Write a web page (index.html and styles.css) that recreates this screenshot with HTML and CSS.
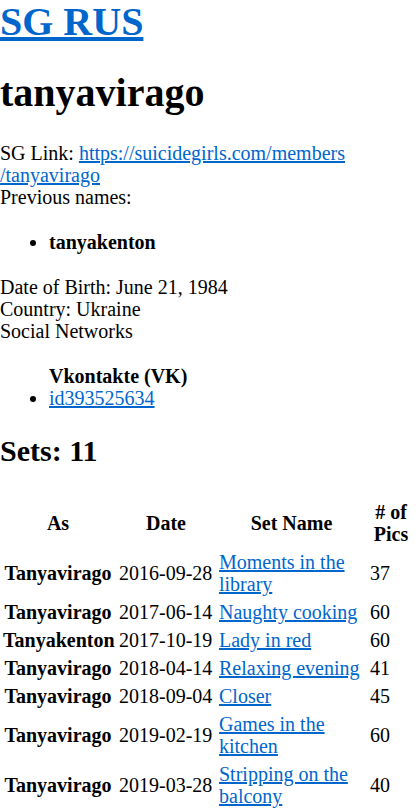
FILE: index.html
```html
<!DOCTYPE html>
<html lang="en">
<head>
    <meta charset="UTF-8">
    <meta name="viewport" content="width=device-width, initial-scale=1.0">
    <title>tanyavirago - SG RUS</title>
    <link rel="stylesheet" href="styles.css">
</head>
<body>
    <h1><a href="#">SG RUS</a></h1>
    <h1>tanyavirago</h1>

    SG Link: <a href="#">https://suicidegirls.com/members<wbr>/tanyavirago</a><br>
    Previous names:
    <ul>
        <li><b>tanyakenton</b></li>
    </ul>
    Date of Birth: June 21, 1984<br>
    Country: Ukraine<br>
    Social Networks
    <ul>
        <b>Vkontakte (VK)</b>
        <li><a href="#">id393525634</a></li>
    </ul>

    <h2>Sets: 11</h2>
    <table class="sets">
        <colgroup>
            <col class="col-as">
            <col class="col-date">
            <col class="col-name">
            <col class="col-pics">
        </colgroup>
        <tr>
            <th>As</th>
            <th>Date</th>
            <th>Set Name</th>
            <th># of Pics</th>
        </tr>
        <tr><th>Tanyavirago</th><td class="date">2016-09-28</td><td><a href="#">Moments in the library</a></td><td>37</td></tr>
        <tr><th>Tanyavirago</th><td class="date">2017-06-14</td><td><a href="#">Naughty cooking</a></td><td>60</td></tr>
        <tr><th>Tanyakenton</th><td class="date">2017-10-19</td><td><a href="#">Lady in red</a></td><td>60</td></tr>
        <tr><th>Tanyavirago</th><td class="date">2018-04-14</td><td><a href="#">Relaxing evening</a></td><td>41</td></tr>
        <tr><th>Tanyavirago</th><td class="date">2018-09-04</td><td><a href="#">Closer</a></td><td>45</td></tr>
        <tr><th>Tanyavirago</th><td class="date">2019-02-19</td><td><a href="#">Games in the kitchen</a></td><td>60</td></tr>
        <tr><th>Tanyavirago</th><td class="date">2019-03-28</td><td><a href="#">Stripping on the balcony</a></td><td>40</td></tr>
    </table>
</body>
</html>
```

FILE: styles.css
```css
body {
    font-family: 'Liberation Serif', 'Times New Roman', serif;
    font-size: 20px;
    line-height: 22px;
    margin: 0;
    color: #000;
}
a {
    color: #0066cc;
}
h1 {
    font-size: 40px;
    line-height: 44px;
    margin: 27px 0;
}
h1:first-child {
    margin-top: 0;
}
h2 {
    font-size: 30px;
    line-height: 34px;
    margin: 25px 0 29px;
}
ul {
    margin: 23px 0;
    padding-left: 49px;
}
.sets {
    width: 416px;
    table-layout: fixed;
    border-spacing: 2px;
}
.col-as {
    width: 113px;
}
.col-date {
    width: 98px;
}
.col-name {
    width: 149px;
}
.col-pics {
    width: 46px;
}
.sets th,
.sets td {
    padding: 2px;
}
.sets th:first-child {
    padding-left: 1px;
}
.sets td {
    text-align: left;
}
.sets .date {
    white-space: nowrap;
}
```
